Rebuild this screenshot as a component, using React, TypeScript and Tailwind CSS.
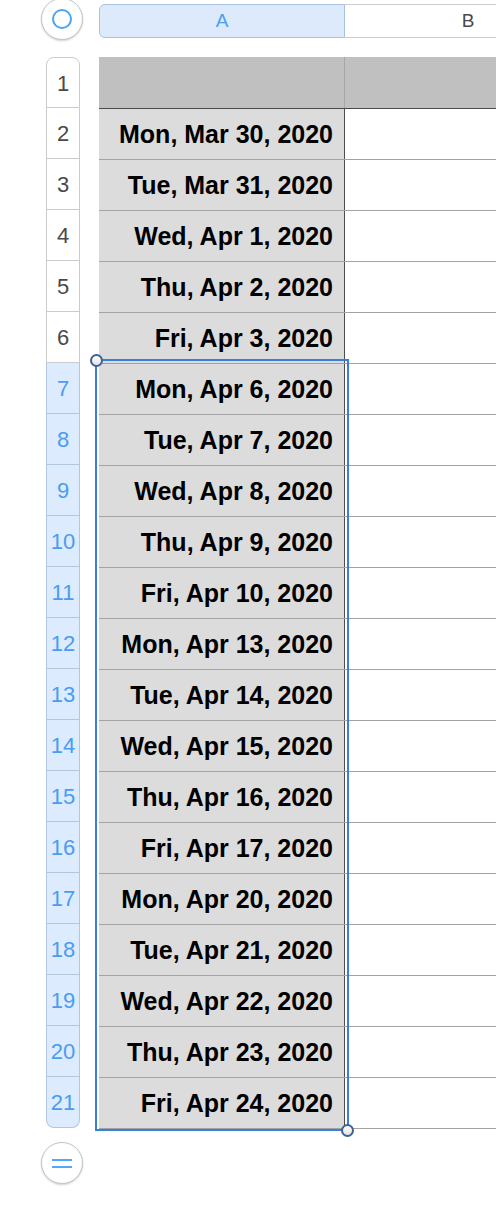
import React from "react";

const dates = [
  "Mon, Mar 30, 2020",
  "Tue, Mar 31, 2020",
  "Wed, Apr 1, 2020",
  "Thu, Apr 2, 2020",
  "Fri, Apr 3, 2020",
  "Mon, Apr 6, 2020",
  "Tue, Apr 7, 2020",
  "Wed, Apr 8, 2020",
  "Thu, Apr 9, 2020",
  "Fri, Apr 10, 2020",
  "Mon, Apr 13, 2020",
  "Tue, Apr 14, 2020",
  "Wed, Apr 15, 2020",
  "Thu, Apr 16, 2020",
  "Fri, Apr 17, 2020",
  "Mon, Apr 20, 2020",
  "Tue, Apr 21, 2020",
  "Wed, Apr 22, 2020",
  "Thu, Apr 23, 2020",
  "Fri, Apr 24, 2020",
];

const font = { fontFamily: '"Liberation Sans", Arial, sans-serif' };

function RowHeader({ n }: { n: number }) {
  const selected = n >= 7;
  const first = n === 1;
  const last = n === 21;
  return (
    <div
      className={`flex h-[51px] items-center justify-center border-x pt-[1px] text-[22px] ${
        selected
          ? "bg-[#dcebfd] border-[#b2c6de] text-[#4a9cf2]"
          : "bg-white border-[#cbcbcb] text-[#4a4a4a]"
      } ${first ? "rounded-t-[8px] border-t" : ""} ${
        last ? "rounded-b-[8px] border-b h-[50px]" : "border-b"
      }`}
    >
      {n}
    </div>
  );
}

export default function App() {
  return (
    <div className="relative h-[1230px] w-[496px] overflow-hidden bg-white" style={font}>
      {/* column header bar */}
      <div className="flex h-[57px] items-start pl-[41px]">
        <div className="mt-[-2px] flex h-[42px] w-[42px] shrink-0 items-center justify-center rounded-full border border-[#c4c4c4] bg-white shadow-[0_1px_2px_rgba(0,0,0,0.18)]">
          <div className="h-[20px] w-[20px] rounded-full border-2 border-[#4aa3f5]" />
        </div>
        <div className="ml-[16px] mt-[4px] flex h-[34px] flex-1 overflow-hidden">
          <div className="flex w-[246px] shrink-0 items-center justify-center rounded-l-[6px] border border-[#a9c1df] bg-[#dceafb] text-[19px] text-[#4a9cf2]">
            A
          </div>
          <div className="flex w-[246px] shrink-0 items-center justify-center border-y border-[#cdcdcd] bg-white text-[19px] text-[#4a4a4a]">
            B
          </div>
        </div>
      </div>

      {/* body */}
      <div className="flex pl-[46px]">
        <div className="flex w-[34px] flex-col">
          {Array.from({ length: 21 }, (_, i) => (
            <RowHeader key={i} n={i + 1} />
          ))}
        </div>
        <div className="ml-[19px] flex flex-1 flex-col">
          <div className="flex h-[52px] border-b border-[#4a4a4a] bg-[#bfc0bf]">
            <div className="w-[246px] border-r border-[#a6a6a6]" />
            <div className="flex-1" />
          </div>
          {dates.map((d) => (
            <div key={d} className="flex h-[51px] border-b border-[#a3a3a3]">
              <div className="flex w-[246px] items-center justify-end border-r border-[#4d4d4d] bg-[#dcdcdc] pr-[11px] pt-[1px] text-[25px] font-bold text-black">
                {d}
              </div>
              <div className="flex-1 bg-white" />
            </div>
          ))}
        </div>
      </div>

      {/* add row button */}
      <div className="ml-[41px] mt-[13px] flex h-[42px] w-[42px] flex-col items-center justify-center gap-[5px] rounded-full border border-[#c4c4c4] bg-white shadow-[0_1px_2px_rgba(0,0,0,0.18)]">
        <div className="h-[2px] w-[20px] bg-[#55a6f4]" />
        <div className="h-[2px] w-[20px] bg-[#55a6f4]" />
      </div>

      {/* selection overlay */}
      <div className="absolute left-[95px] top-[359px] h-[772px] w-[254px] border-2 border-[#3a7fd6]" />
      <div className="absolute left-[90px] top-[354px] h-[13px] w-[13px] rounded-full border-2 border-[#3f5f98] bg-gradient-to-b from-white to-[#e4e4e4]" />
      <div className="absolute left-[341px] top-[1124px] h-[13px] w-[13px] rounded-full border-2 border-[#3f5f98] bg-gradient-to-b from-white to-[#e4e4e4]" />
    </div>
  );
}
